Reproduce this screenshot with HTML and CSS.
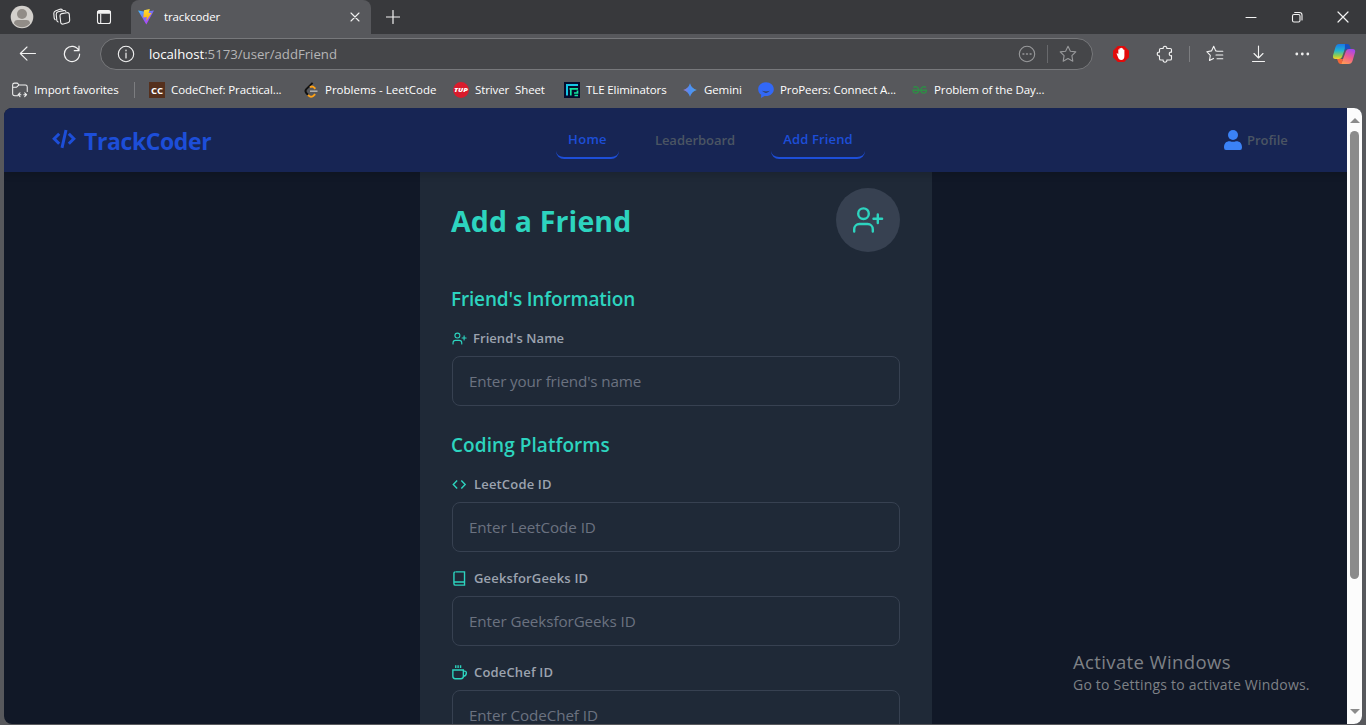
FILE: index.html
```html
<!DOCTYPE html>
<html lang="en">
<head>
<meta charset="utf-8">
<title>trackcoder</title>
<link rel="stylesheet" href="styles.css">
</head>
<body>
<svg class="defs" width="0" height="0">
  <symbol id="user-plus" viewBox="0 0 32 32"><g fill="none" stroke="currentColor" stroke-width="2.4" stroke-linecap="round"><circle cx="11.500" cy="9.700" r="5.300"/><path d="M2.200 27.600v-2.400a5.200 5.200 0 0 1 5.200-5.200h8.200a5.200 5.200 0 0 1 5.200 5.200v2.400M25.800 10.500v8.600M21.500 14.800h8.600"/></g></symbol>
</svg>
<div class="browser">
  <div class="tabstrip">
    <svg class="avatar" viewBox="0 0 24 24"><circle cx="12" cy="12" r="11.300" fill="#d3d0cc"/><circle cx="12" cy="9" r="5" fill="#918c87"/><path d="M4 18.500c0-2.500 1.500-3.500 3.500-3.500h9c2 0 3.500 1 3.500 3.500a10.500 10.500 0 0 1-16 0z" fill="#918c87"/></svg>
    <svg class="ic-work line" viewBox="0 0 18 18"><path d="M8.700 5.600l5.300-.9q2-.3 2.300 1.700l.4 5.800q0 2-1.900 2.500l-4.500 1.300q-2.300.5-2.600-1.700L7 8q-.1-2 1.700-2.400zM5.200 14q-1.200-.2-1.400-1.700l-.6-6q0-2 1.900-2.500l5.500-1.200q1.500-.3 2.300.7M2.200 11.700q-.8-.5-1-1.500L.8 5.500Q.8 3.700 2.400 3l4.500-1.700Q8.200.8 9.200 1.500"/></svg>
    <svg class="ic-tabs line" viewBox="0 0 16 16"><rect x="1.500" y="1.500" width="13" height="13" rx="2"/><path d="M4.700 5v9.500"/><path d="M2.500 3.300h11" stroke-width="3"/></svg>
    <div class="tab">
      <svg class="vite" viewBox="0 0 16 16"><defs><linearGradient id="va" x1="0" y1="0" x2=".7" y2="1"><stop stop-color="#41bdff"/><stop offset=".5" stop-color="#7b6cf5"/><stop offset="1" stop-color="#c13cff"/></linearGradient><linearGradient id="vb" x1="0" y1="0" x2="0" y2="1"><stop stop-color="#ffdf3a"/><stop offset="1" stop-color="#ffa700"/></linearGradient></defs><path d="M0 1.500l7.500 1.300L16 1.500 8.300 15.500z" fill="url(#va)"/><path d="M6 1.200L11.800 0 10.600 4h2.900L8.100 12.300l.8-4.300-3.600.5z" fill="url(#vb)"/></svg>
      <span class="tab-title">trackcoder</span>
      <svg class="tab-close line" viewBox="0 0 10 10"><path d="M1 1l8 8M9 1L1 9"/></svg>
    </div>
    <svg class="newtab line" viewBox="0 0 14 14"><path d="M7 .5v13M.5 7h13" stroke-width="1.200"/></svg>
    <div class="winctl">
      <svg viewBox="0 0 12 12" class="line"><path d="M1 6.500h10"/></svg>
      <svg viewBox="0 0 12 12" class="line"><rect x="1.500" y="3.500" width="7.500" height="7.500" rx="1.500"/><path d="M3.700 1.500H8.500A2.500 2.500 0 0 1 11 4v5"/></svg>
      <svg viewBox="0 0 12 12" class="line"><path d="M1 1l10 10M11 1L1 11" stroke-width="1.200"/></svg>
    </div>
  </div>

  <div class="toolbar">
    <svg class="back line" viewBox="0 0 18 18"><path d="M16.500 8.500H1.500M8 2L1.300 8.500 8 15.200"/></svg>
    <svg class="reload line" viewBox="0 0 18 18"><path d="M15.800 5.500A7.600 7.600 0 1 0 16.600 9M16 1v4.700h-4.700" stroke-width="1.200"/></svg>
    <div class="urlbar">
      <svg class="info line" viewBox="0 0 18 18"><circle cx="9" cy="9" r="7.700"/><path d="M9 8v5M9 5v.8" stroke-width="1.200"/></svg>
      <span class="url"><b>localhost</b>:5173/user/addFriend</span>
      <svg class="more line" viewBox="0 0 18 18"><circle cx="9" cy="9" r="7.700"/><path d="M5 9h.8M8.600 9h.8M12.200 9h.8" stroke-width="1.600"/></svg>
      <i class="vline"></i>
      <svg class="star line" viewBox="0 0 18 18"><path d="M9 1.200l2.400 5 5.400.7-3.900 3.800.9 5.500L9 13.600l-4.800 2.600.9-5.500L1.200 6.900l5.400-.7z"/></svg>
    </div>
    <div class="tools">
      <svg viewBox="0 0 18 18"><path d="M5.800 1h6.400L17 5.800v6.400L12.200 17H5.800L1 12.200V5.800z" fill="#e10b0b"/><path d="M5.300 8.200l1 1V4.800c0-.8 1.200-.8 1.200 0V3.600c0-.8 1.200-.8 1.200 0v-.3c0-.8 1.300-.8 1.300 0v.6c0-.8 1.200-.8 1.200 0v1.200c0-.7 1.200-.7 1.200 0V11c0 2.500-1.200 4-3.200 4-1.700 0-2.500-1-3.200-2.700L4.700 9c-.3-.6.2-1 .6-.8z" fill="#fff"/></svg>
      <svg class="line puzzle" viewBox="0 0 18 18"><path d="M4.800 3.500h2.400c-.6-3 4.200-3 3.600 0h3.400q1.300 0 1.300 1.300v2.400c-3-.8-3 4.200 0 3.400v3.100q0 1.300-1.300 1.300h-3.400c.7 3-4.300 3-3.600 0H4.800q-1.300 0-1.300-1.300v-3c-3 .6-3-4.200 0-3.600V4.800q0-1.300 1.300-1.300z"/></svg>
      <i class="vline"></i>
      <svg class="line" viewBox="0 0 18 18"><path d="M11.500 6.200L9.700 5.900 7.700 1.300 5.500 5.900l-4.700.8 3.500 3.600-.8 5.200 4-2.100M10.500 6.200h6.300M10 10h6.800M11 13.800h5.800"/></svg>
      <svg class="line" viewBox="0 0 18 18"><path d="M8.500 1v12M4 8.500L8.500 13 13 8.500M2.500 16.500h12"/></svg>
      <svg viewBox="0 0 18 18" fill="#eee"><circle cx="2.800" cy="9" r="1.400"/><circle cx="8.300" cy="9" r="1.400"/><circle cx="13.800" cy="9" r="1.400"/></svg>
      <svg class="copilot" viewBox="0 0 24 24"><defs><linearGradient id="ca" x1="0" y1="0" x2="0" y2="1"><stop stop-color="#1878e8"/><stop offset=".45" stop-color="#22b5d0"/><stop offset=".8" stop-color="#9ccf45"/><stop offset="1" stop-color="#ffd02c"/></linearGradient><linearGradient id="cb" x1=".7" y1="0" x2=".3" y2="1"><stop stop-color="#a347ec"/><stop offset=".5" stop-color="#ee5b8f"/><stop offset="1" stop-color="#ff9a55"/></linearGradient></defs><path d="M7 2h8.500l-2 3L10 15q-.8 2-3 2H3.500Q.5 17 1 13.500L3.500 5Q4.500 2 7 2z" fill="url(#ca)"/><path d="M13 2h2.500q1.700 0 2.300 2l1 2.800H16q-2.500 0-3.300 2.700z" fill="#174fc0"/><path d="M17 7h3.500Q24 7 23 10.500L20.500 19q-1 3-4 3H8l2.300-3L14 9q1-2 3-2z" fill="url(#cb)"/><path d="M7 17h4l-1.500 5Q6.500 22 6 19.500L5 17z" fill="#f26739"/></svg>
    </div>
  </div>

  <div class="bookmarks">
    <div class="bm b0"><svg class="line" viewBox="0 0 17 17"><path d="M6 14.500H3Q.7 14.500.7 12.500V3.200Q.7 1.200 2.700 1.200h3l2 2h6.500q2 0 2 2v5M.7 5.500h4.200l2.300-2.300M8.500 11.500l-2 2 2 2M6.500 13.500h3M13.500 11.500l2 2-2 2M15.500 13.500h-3"/></svg><span>Import favorites</span></div>
    <i class="vline"></i>
    <div class="bm b1"><svg viewBox="0 0 16 16"><rect width="16" height="16" fill="#55301d"/><text x="8" y="11.500" text-anchor="middle" class="cc">CC</text></svg><span>CodeChef: Practical...</span></div>
    <div class="bm b2"><svg viewBox="0 0 16 16" fill="none" stroke-width="1.900"><path d="M9.600.8L3.300 7.200q-1.700 1.900 0 3.800l1.900 2" stroke="#111"/><path d="M7 5.300q2-1.500 3.600-.2l1.800 1.600M5 12.800l.7.900q2 2 4.500.2l2-1.800" stroke="#ffa116"/><path d="M7 9.200h7.500" stroke="#b3b3b3" stroke-width="1.500"/></svg><span>Problems - LeetCode</span></div>
    <div class="bm b3"><svg viewBox="0 0 16 16"><circle cx="8" cy="8" r="7.900" fill="#d91c2c"/><text x="1" y="10" class="tup" textLength="14" lengthAdjust="spacingAndGlyphs">TUP</text></svg><span>Striver &nbsp;Sheet</span></div>
    <div class="bm b4"><svg viewBox="0 0 16 16" fill="none" stroke-width="2"><rect width="16" height="16" fill="#050b2d"/><path d="M2 3h12M3 3v10.500" stroke="#16c5e5"/><path d="M5.500 6.800H14M6.800 6.800v6.700M14 13.500h-3.500M13.500 8.500v2.500h-3.500" stroke="#12e5a0" stroke-width="1.700"/></svg><span>TLE Eliminators</span></div>
    <div class="bm b5"><svg viewBox="0 0 16 16"><defs><linearGradient id="ga"><stop stop-color="#9d79c9"/><stop offset=".45" stop-color="#4c8df5"/><stop offset="1" stop-color="#4fa0e8"/></linearGradient></defs><path d="M8 1.200Q9.500 6.500 14.800 8 9.500 9.500 8 14.800 6.500 9.500 1.200 8 6.500 6.500 8 1.200z" fill="url(#ga)"/></svg><span>Gemini</span></div>
    <div class="bm b6"><svg viewBox="0 0 16 16"><path d="M8 .3c4.500 0 7.800 3 7.800 6.900S12.500 14 8 14l-1.500-.1L3 16l.2-3.200C1.200 11.500.2 9.600.2 7.200.2 3.300 3.500.3 8 .3z" fill="#3268f6"/><path d="M4.200 8.800q3.800 1.500 7.600 0-3.800 4.200-7.600 0z" fill="#334155"/></svg><span>ProPeers: Connect A...</span></div>
    <div class="bm b7"><svg viewBox="0 0 16 16" fill="none" stroke="#2f8d46" stroke-width="1.400"><path d="M1.500 5.500C3 4 6.700 4.700 6.700 8c0 4-5.700 4.300-5.700.3h13.500c0 4-5.700 3.700-5.700-.3 0-3.300 3.700-4 5.200-2.500"/></svg><span>Problem of the Day...</span></div>
  </div>

  <div class="viewport">
    <div class="page">
      <nav class="nav">
        <div class="brand"><svg viewBox="0 0 24 20" fill="none" stroke="currentColor" stroke-width="3"><path d="M7.200 4.700L2.200 9.700l5 5M16.800 4.700l5 5-5 5M14 1L10 18.800"/></svg><span>TrackCoder</span></div>
        <div class="links"><a class="on l-home"><span>Home</span></a><a class="l-board"><span>Leaderboard</span></a><a class="on l-add"><span>Add Friend</span></a></div>
        <div class="profile"><svg viewBox="0 0 18 20" fill="#3b82f6"><circle cx="9" cy="5" r="5"/><path d="M0 17.500C0 13 2.500 11 6 11.200q3 1 6 0C15.500 11 18 13 18 17.500q0 2.500-2 2.500H2q-2 0-2-2.500z"/></svg><span>Profile</span></div>
      </nav>
      <main class="card">
        <header class="head"><h1>Add a Friend</h1><div class="badge"><svg><use href="#user-plus"/></svg></div></header>
        <section>
          <h2 class="h-info">Friend's Information</h2>
          <div class="field"><label class="lb1"><svg><use href="#user-plus"/></svg><span>Friend's Name</span></label><div class="input"><span class="p1">Enter your friend's name</span></div></div>
        </section>
        <section>
          <h2 class="h-code">Coding Platforms</h2>
          <div class="field"><label><svg viewBox="0 0 14 14" class="fi"><path d="M4.800 3.200L1.200 7l3.600 3.800M8.700 3.200L12.300 7l-3.600 3.800"/></svg><span>LeetCode ID</span></label><div class="input"><span class="p2">Enter LeetCode ID</span></div></div>
          <div class="field"><label><svg viewBox="0 0 14 14" class="fi"><path d="M3.500.8h8.200v12.400H3.200q-1.400 0-1.400-1.400V2.200Q1.800.8 3.200.8M1.800 10.300h9.900"/></svg><span>GeeksforGeeks ID</span></label><div class="input"><span class="p3">Enter GeeksforGeeks ID</span></div></div>
          <div class="field"><label><svg viewBox="0 0 14 14" class="fi"><path d="M.8 4.700h9.800v5.800q0 2.300-2.300 2.300H3Q.8 12.800.8 10.500zM10.600 5.700h1.200q1.600 0 1.600 1.600c0 2-1 3-2.800 3.300M3.500.3v2.600M5.700.3v2.600M8 .3v2.600"/></svg><span>CodeChef ID</span></label><div class="input"><span class="p4">Enter CodeChef ID</span></div></div>
        </section>
      </main>
    </div>
    <div class="scroll"><i class="up"></i><i class="thumb"></i><i class="down"></i></div>
  </div>
</div>
<div class="activate"><div class="a1">Activate Windows</div><div class="a2">Go to Settings to activate Windows.</div></div>
</body>
</html>
```
FILE: styles.css
```css
* { box-sizing: border-box; }
body { margin: 0; width: 1366px; height: 725px; overflow: hidden; font-family: "Open Sans", "Noto Sans", sans-serif; color: #fff; background: #57585c; }
svg { display: block; flex: none; }
span { white-space: nowrap; }
.defs { position: absolute; }
.line { fill: none; stroke: #f2f2f2; stroke-width: 1.1; stroke-linecap: round; stroke-linejoin: round; }
.vline { width: 1px; flex: none; background: #7c7d80; }
.browser { height: 725px; display: flex; flex-direction: column; }

.tabstrip { height: 34px; flex: none; display: flex; align-items: center; background: #38393c; padding-left: 10px; }
.avatar { width: 24px; height: 24px; }
.ic-work { width: 18px; height: 18px; margin-left: 19px; }
.ic-tabs { width: 16px; height: 16px; margin-left: 25px; }
.tab { width: 240px; height: 34px; margin-left: 19px; padding: 0 11px 0 7px; display: flex; align-items: center; background: #57585c; border-radius: 8px 8px 0 0; }
.vite { width: 16px; height: 16px; }
.tab-title { margin: -2px 0 0 10px; flex: 1; font-size: 11.5px; letter-spacing: -.12px; }
.tab-close { width: 10px; height: 10px; }
.newtab { width: 14px; height: 14px; margin-left: 15px; }
.winctl { margin-left: auto; padding-right: 17px; display: flex; gap: 34px; }
.winctl svg { width: 12px; height: 12px; }

.toolbar { height: 40px; flex: none; display: flex; align-items: center; }
.back { width: 18px; height: 18px; margin-left: 19px; }
.reload { width: 18px; height: 18px; margin-left: 26px; }
.urlbar { width: 993px; height: 32px; margin-left: 19px; padding: 0 15px 0 16px; display: flex; align-items: center; border: 1px solid #77787b; border-radius: 16px; background: #454649; }
.info { width: 18px; height: 18px; }
.url { flex: 1; margin-left: 14px; font-size: 13.2px; letter-spacing: -.01px; color: #b5b5b6; }
.url b { font-weight: 400; color: #fff; }
.more, .star { width: 18px; height: 18px; stroke: #98999b; }
.urlbar .vline { height: 18px; margin: 0 11px; background: #68696c; }
.tools { flex: 1; display: flex; align-items: center; margin-left: 19px; gap: 26px; }
.tools svg { width: 18px; height: 18px; }
.tools .vline { height: 16px; margin: 0 -10px 0 -11px; }
.tools .copilot { width: 24px; height: 24px; margin-left: -6px; }

.bookmarks { height: 34px; flex: none; display: flex; align-items: center; padding: 0 0 2px 12px; font-size: 11.5px; letter-spacing: -.1px; }
.bm { display: flex; align-items: center; gap: 6px; flex: none; }
.bm svg { width: 16px; height: 16px; }
.bm span { margin-top: -2px; }
.bookmarks .vline { height: 16px; margin-right: 14px; }
.b0 { width: 122px; }
.b1 { width: 154px; }
.b2 { width: 150px; letter-spacing: 0; }
.b3 { width: 111px; }
.b4 { width: 118px; }
.b5 { width: 76px; }
.b6 { width: 154px; }
.cc { font: 700 9.5px "Open Sans", sans-serif; fill: #fff; letter-spacing: 0; }
.tup { font: italic 800 5.5px "Open Sans", sans-serif; fill: #fff; letter-spacing: 0; }

.viewport { width: 1358px; height: 616px; margin-left: 4px; display: flex; overflow: hidden; border-radius: 8px; background: #111827; }
.page { width: 1343px; height: 616px; overflow: hidden; display: flex; flex-direction: column; align-items: center; }
.nav { position: relative; width: 100%; height: 64px; flex: none; display: flex; align-items: center; background: #172554; box-shadow: 0 4px 6px rgba(0,0,0,.12); font-size: 13px; font-weight: 600; color: #4b5563; letter-spacing: -.03px; }
.brand { width: 504px; padding: 2px 0 0 48px; display: flex; align-items: center; gap: 8px; color: #1d4ed8; font-size: 23px; font-weight: 700; letter-spacing: -.4px; }
.brand svg { width: 24px; height: 20px; margin-top: -4px; }
.links { width: 668px; padding-left: 48px; display: flex; align-items: center; }
.links a { height: 38px; display: flex; align-items: center; justify-content: center; }
.links .on { color: #1d4ed8; border-bottom: 2px solid #1d4ed8; border-radius: 8px; }
.l-home { width: 63px; letter-spacing: .3px; }
.l-board { width: 80px; margin: 0 36px; }
.l-add { width: 94px; letter-spacing: .15px; }
.profile { padding-left: 48px; display: flex; align-items: center; gap: 5px; }
.profile svg { width: 18px; height: 20px; }

.card { width: 512px; margin-left: 1px; flex: none; padding: 16px 32px 0; background: #1f2937; }
.head { height: 64px; display: flex; align-items: center; justify-content: space-between; }
h1, h2 { margin: 0 0 0 -1px; color: #2dd4bf; white-space: nowrap; }
h1 { font-size: 28.5px; line-height: 40px; font-weight: 700; padding-top: 2px; letter-spacing: .15px; }
.badge { width: 64px; height: 64px; border-radius: 50%; background: #374151; color: #2dd4bf; padding: 16px; }
.badge svg { width: 32px; height: 32px; }
section { padding-top: 33px; }
section + section { padding-top: 25px; }
h2 { font-size: 19px; line-height: 28px; font-weight: 600; margin-bottom: 15px; }
.h-info { letter-spacing: -.17px; }
.h-code { letter-spacing: .06px; }
.field { margin-bottom: 16px; }
section:first-of-type .field { margin-bottom: 0; }
label { height: 20px; margin-bottom: 8px; display: flex; align-items: center; gap: 7px; color: #9ca3af; font-size: 13px; font-weight: 600; letter-spacing: .17px; }
.lb1 { letter-spacing: .05px; gap: 6px; }
label svg { width: 15px; height: 15px; color: #2dd4bf; }
.fi { fill: none; stroke: #2dd4bf; stroke-width: 1.3; }
.input { height: 50px; padding-left: 16px; display: flex; align-items: center; border: 1px solid #374151; border-radius: 8px; font-size: 15.2px; letter-spacing: -.07px; color: #6b7280; }
.p1 { letter-spacing: -.13px; }

.scroll { width: 15px; display: flex; flex-direction: column; align-items: center; background: #fcfcfc; }
.up, .down { border: 5px solid transparent; border-top: 0; border-bottom: 5px solid #8b8b8b; margin-top: 10px; }
.thumb { width: 9px; height: 448px; margin-top: 8px; border-radius: 5px; background: #8b8b8b; }
.down { border-top: 5px solid #8b8b8b; border-bottom: 0; margin-top: 130px; }

.activate { position: absolute; left: 1073px; top: 649px; color: #7e8186; }
.a1 { font-size: 18.5px; line-height: 26px; letter-spacing: .38px; }
.a2 { font-size: 14px; line-height: 20px; white-space: nowrap; letter-spacing: .21px; }
```
